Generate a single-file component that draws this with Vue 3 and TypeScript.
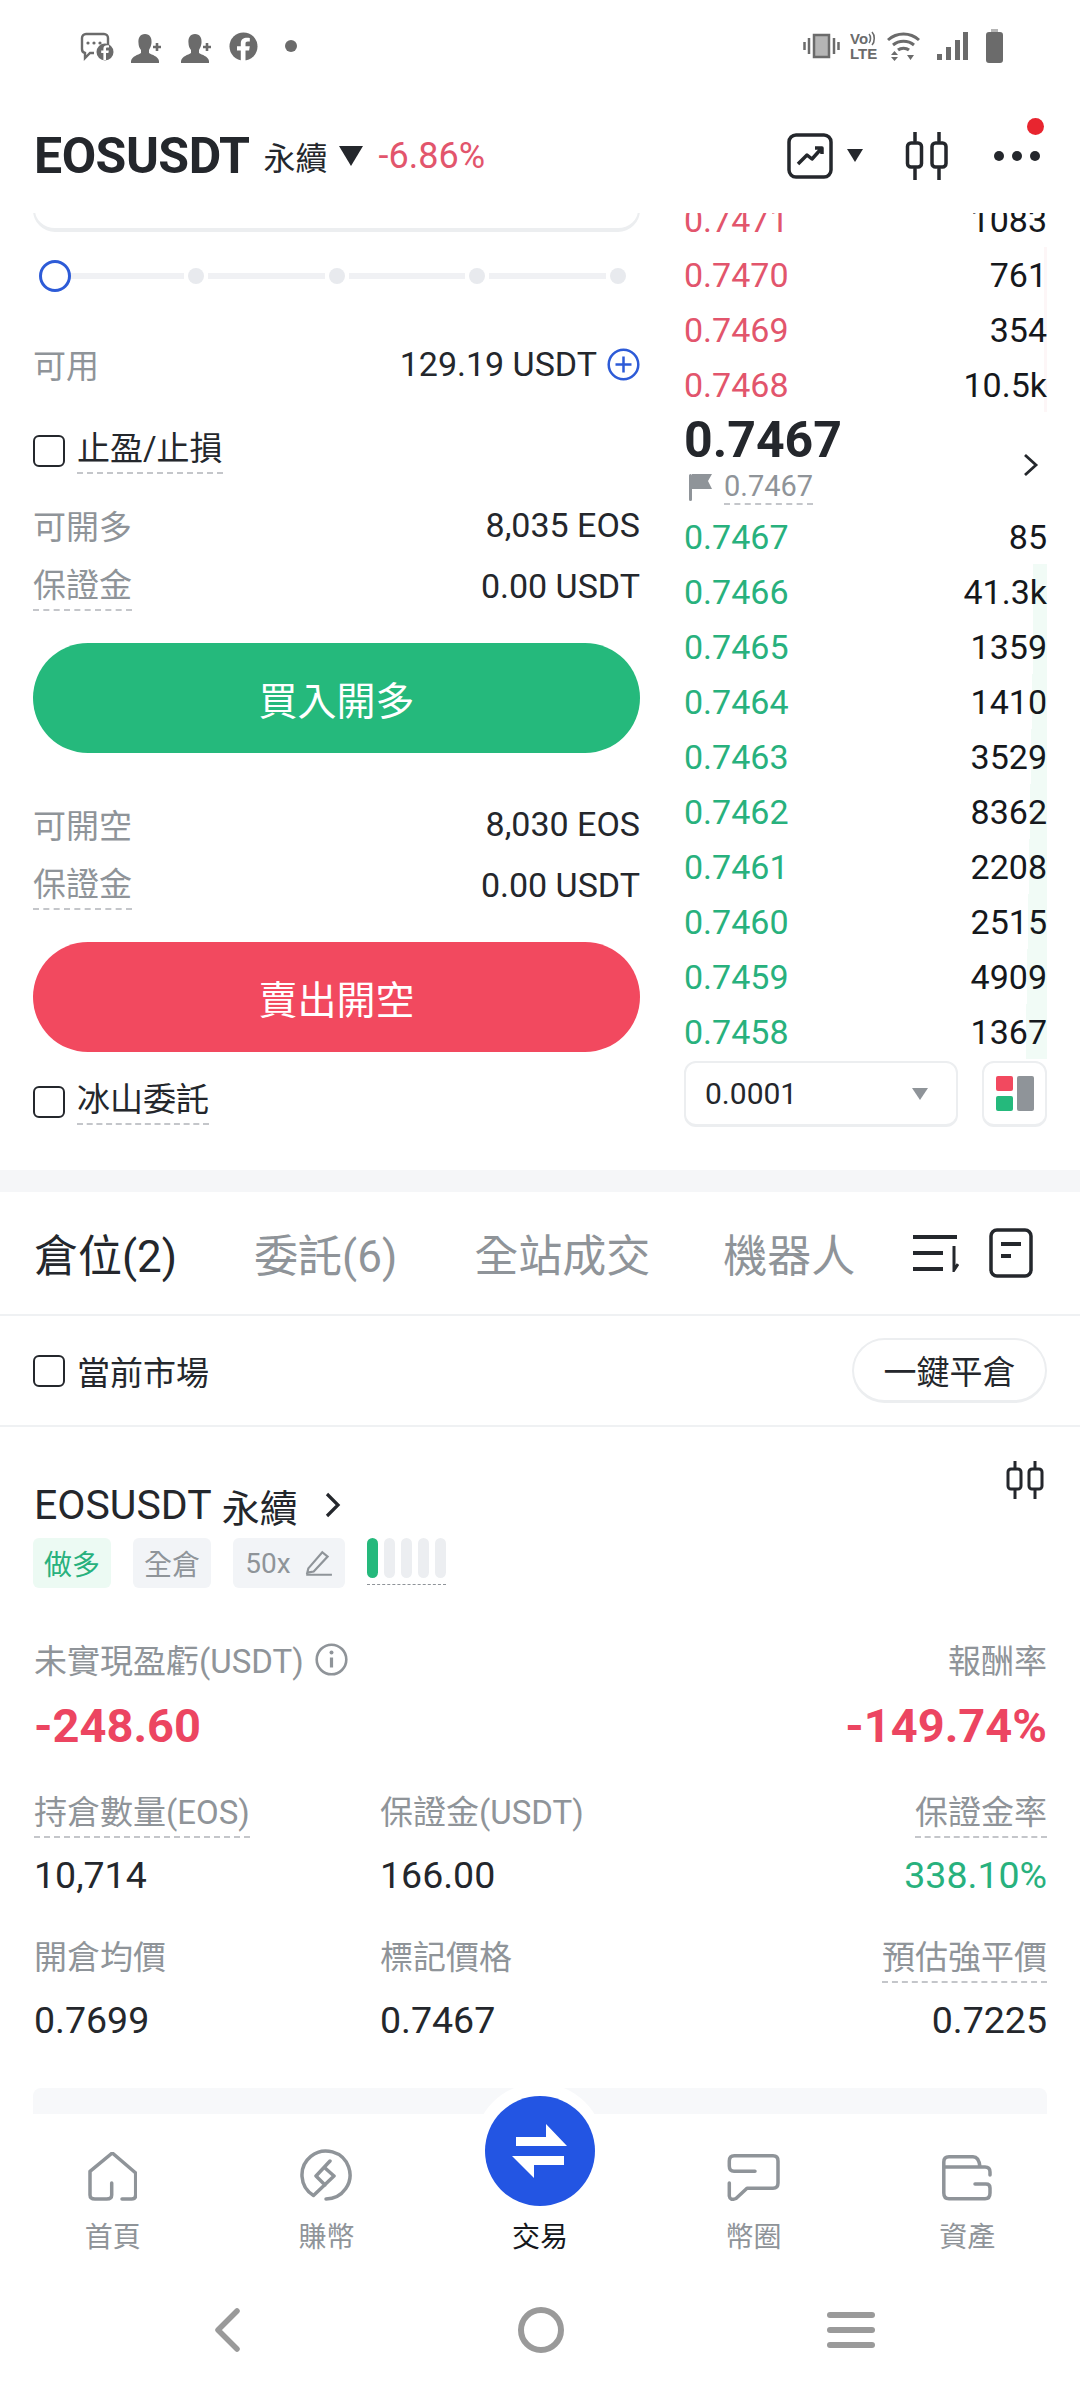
<template>
  <div class="page">
    <div class="status-bar">
      <div class="status-left">
        <svg width="34" height="30" viewBox="0 0 34 30" class="st-chat"><path d="M6 2h18a4 4 0 0 1 4 4v7M14 21H10l-5 5v-5a4 4 0 0 1-3-4V6a4 4 0 0 1 4-4" fill="none" stroke="#6b6b6b" stroke-width="2.4"/><circle cx="8" cy="11" r="1.6" fill="#6b6b6b"/><circle cx="14" cy="11" r="1.6" fill="#6b6b6b"/><circle cx="20" cy="11" r="1.6" fill="#6b6b6b"/><circle cx="25" cy="20" r="8.5" fill="#6b6b6b"/><path d="M26 28v-7h2.4l.4-2.6H26v-1.6c0-.8.3-1.2 1.2-1.2H29v-2.2c-2.8-.5-5.6 0-5.6 3.4v1.6h-2.2V21h2.2v7z" fill="#fff"/></svg>
        <svg v-for="n in 2" :key="n" width="33" height="29" viewBox="0 0 33 29" class="st-person"><path d="M14 0c5 0 7 4 6.500 9-.3 3-1.500 5-2.500 7v3c3 2 9 3 10 8v2H0v-2c1-5 7-6 10-8v-3C8.500 14 7.500 12 7.500 9 7 4 9 0 14 0z" fill="#6b6b6b"/><path d="M26 9v8M22 13h8" stroke="#6b6b6b" stroke-width="2.600"/></svg>
        <svg width="29" height="29" viewBox="0 0 29 29" class="st-fb"><circle cx="14.500" cy="14.500" r="14" fill="#6b6b6b"/><path d="M16.500 29V18.500h3.600l.7-4.300h-4.300v-2.400c0-1.300.6-2.200 2.300-2.200h2V6c-4.800-.9-9 .3-9 5.500v2.700H8v4.300h3.800V29z" fill="#fff"/></svg>
        <span class="st-dot"></span>
      </div>
      <div class="status-right">
        <svg width="37" height="26" viewBox="0 0 37 26"><rect x="11" y="2" width="15" height="22" fill="#b5b5b5" stroke="#6b6b6b" stroke-width="2.500"/><path d="M1.500 9v8M6 5v16M31 5v16M35.500 9v8" stroke="#6b6b6b" stroke-width="2.500"/></svg>
        <svg width="28" height="30" viewBox="0 0 28 30"><text x="0" y="13" class="volte">Vo</text><path d="M19 3c2 2 2 7 0 9M22 1c3 3 3 10 0 13" fill="none" stroke="#6b6b6b" stroke-width="1.600"/><text x="0" y="28" class="volte">LTE</text></svg>
        <svg width="33" height="30" viewBox="0 0 33 30"><path d="M1 9c9-8 22-8 31 0M6 14c6-5 15-5 21 0M11 19c3-2.500 8-2.500 11 0" fill="none" stroke="#6b6b6b" stroke-width="3"/><path d="M4 24l3.500-4 3.500 4zM4 26l3.500 4 3.500-4zM20 24h7l-3.500 5z" fill="#6b6b6b"/></svg>
        <svg width="31" height="28" viewBox="0 0 31 28"><rect x="0" y="22" width="5" height="6" fill="#6b6b6b"/><rect x="9" y="15" width="5" height="13" fill="#6b6b6b"/><rect x="18" y="8" width="5" height="20" fill="#6b6b6b"/><rect x="26" y="0" width="5" height="28" fill="#6b6b6b"/></svg>
        <svg width="17" height="34" viewBox="0 0 17 34"><path d="M5 0h7v3h2a3 3 0 0 1 3 3v25a3 3 0 0 1-3 3H3a3 3 0 0 1-3-3V6a3 3 0 0 1 3-3h2z" fill="#6b6b6b"/><path d="M5 0h7v3H5z" fill="#b5b5b5"/></svg>
      </div>
    </div>

    <header class="top-bar">
      <span class="symbol">EOSUSDT</span>
      <span class="perp">永續</span>
      <span class="caret"></span>
      <span class="change">-6.86%</span>
      <div class="top-icons">
        <svg width="46" height="46" viewBox="0 0 46 46" class="chart-ic"><rect x="2" y="2" width="42" height="42" rx="7" fill="none" stroke="#24272c" stroke-width="3.500"/><path d="M11 31l9-9 5 4 9-10M28 15h7v6" fill="none" stroke="#24272c" stroke-width="3.500" stroke-linejoin="round"/></svg>
        <span class="caret small"></span>
        <svg width="44" height="48" viewBox="0 0 44 48" class="candle-ic"><path d="M10 0v9M10 37v11M34 0v9M34 37v11" stroke="#24272c" stroke-width="3.500" stroke-linecap="round"/><rect x="2.500" y="11" width="14" height="24" rx="3.500" fill="none" stroke="#24272c" stroke-width="3.500"/><rect x="27" y="11" width="14" height="24" rx="3.500" fill="none" stroke="#24272c" stroke-width="3.500"/></svg>
        <div class="more">
          <i></i><i></i><i></i>
          <span class="red-dot"></span>
        </div>
      </div>
    </header>

    <section class="trade">
      <div class="form-col">
        <div class="input-card"></div>
        <div class="slider">
          <span class="ring"></span>
          <template v-for="n in 4" :key="n">
            <span class="track"></span>
            <span class="stop"></span>
          </template>
        </div>
        <div class="row avail">
          <span class="muted">可用</span>
          <span class="value">129.19 USDT
            <svg width="33" height="33" viewBox="0 0 33 33" class="plus"><circle cx="16.500" cy="16.500" r="14.800" fill="none" stroke="#2d5bd7" stroke-width="2.500"/><path d="M16.500 8.500v16M8.500 16.500h16" stroke="#2d5bd7" stroke-width="2.500"/></svg>
          </span>
        </div>
        <div class="row check-row tp">
          <span class="box"></span>
          <span class="dash">止盈/止損</span>
        </div>
        <div class="row open-long">
          <span class="muted">可開多</span>
          <span class="value">8,035 EOS</span>
        </div>
        <div class="row margin">
          <span class="muted dash">保證金</span>
          <span class="value">0.00 USDT</span>
        </div>
        <button class="big-btn buy">買入開多</button>
        <div class="row open-short">
          <span class="muted">可開空</span>
          <span class="value">8,030 EOS</span>
        </div>
        <div class="row margin">
          <span class="muted dash">保證金</span>
          <span class="value">0.00 USDT</span>
        </div>
        <button class="big-btn sell">賣出開空</button>
        <div class="row check-row iceberg">
          <span class="box"></span>
          <span class="dash">冰山委託</span>
        </div>
      </div>

      <div class="book-col">
        <div v-for="a in asks" :key="a.price" class="book-row">
          <span class="depth ask" :style="{ width: a.depth + 'px' }"></span>
          <span class="ask-price">{{ a.price }}</span>
          <span class="qty">{{ a.qty }}</span>
        </div>
        <div class="mid">
          <div class="mid-left">
            <div class="mid-price">0.7467</div>
            <div class="mark">
              <svg width="24" height="28" viewBox="0 0 24 28"><path d="M1 2.500a1.500 1.500 0 0 1 3 0V26.500a1.500 1.500 0 0 1-3 0zM4 1h20l-4 7 4 8H4z" fill="#8f9499"/></svg>
              <span class="mark-val">0.7467</span>
            </div>
          </div>
          <svg width="16" height="24" viewBox="0 0 16 24" class="mid-arrow"><path d="M2 2l11 10L2 22" fill="none" stroke="#24272c" stroke-width="2.800"/></svg>
        </div>
        <div v-for="b in bids" :key="b.price" class="book-row">
          <span class="depth bid" :style="{ width: b.depth + 'px' }"></span>
          <span class="bid-price">{{ b.price }}</span>
          <span class="qty">{{ b.qty }}</span>
        </div>
        <div class="book-foot">
          <div class="tick">
            <span>0.0001</span>
            <span class="tick-caret"></span>
          </div>
          <div class="layout-btn">
            <div class="lb-left"><i class="lb-red"></i><i class="lb-green"></i></div>
            <i class="lb-gray"></i>
          </div>
        </div>
      </div>
    </section>

    <div class="band"></div>

    <nav class="tabs">
      <span class="tab active">倉位(2)</span>
      <span class="tab">委託(6)</span>
      <span class="tab">全站成交</span>
      <span class="tab">機器人</span>
      <svg width="46" height="38" viewBox="0 0 46 38" class="tab-sort"><path d="M0 3h44M0 19h30M0 35h30" stroke="#24272c" stroke-width="4"/><path d="M41 12v24l4-6" fill="none" stroke="#24272c" stroke-width="3"/></svg>
      <svg width="44" height="50" viewBox="0 0 44 50"><rect x="2" y="2" width="40" height="46" rx="6" fill="none" stroke="#24272c" stroke-width="3.500"/><path d="M12 16h20M12 28h10" stroke="#24272c" stroke-width="4"/></svg>
    </nav>

    <div class="market-row">
      <span class="box"></span>
      <span class="market-label">當前市場</span>
      <button class="close-all">一鍵平倉</button>
    </div>

    <section class="position">
      <div class="pos-head">
        <span class="pos-name">EOSUSDT</span>
        <span class="pos-perp">永續</span>
        <svg width="18" height="28" viewBox="0 0 18 28" class="pos-arrow"><path d="M3 3l11 11L3 25" fill="none" stroke="#24272c" stroke-width="3.200"/></svg>
        <svg width="38" height="38" viewBox="0 0 38 38" class="pos-candle"><path d="M9 0v7M9 29v9M29 0v7M29 29v9" stroke="#24272c" stroke-width="3" stroke-linecap="round"/><rect x="2" y="8" width="13" height="20" rx="3" fill="none" stroke="#24272c" stroke-width="3"/><rect x="23" y="8" width="13" height="20" rx="3" fill="none" stroke="#24272c" stroke-width="3"/></svg>
      </div>
      <div class="tags">
        <span class="tag long">做多</span>
        <span class="tag">全倉</span>
        <span class="tag lev">50x
          <svg width="30" height="30" viewBox="0 0 28 28"><path d="M3 25h24M5 19L18 4l5 4-13 14-6 1z" fill="none" stroke="#8f9499" stroke-width="2"/></svg>
        </span>
        <div class="risk">
          <i class="on"></i><i></i><i></i><i></i><i></i>
        </div>
      </div>

      <div class="pnl-head">
        <span class="muted">未實現盈虧(USDT)
          <svg width="33" height="33" viewBox="0 0 33 33" class="info"><circle cx="16.500" cy="16.500" r="14.800" fill="none" stroke="#8f9499" stroke-width="2.600"/><path d="M16.500 14.500v10" stroke="#8f9499" stroke-width="3.200"/><circle cx="16.500" cy="9.500" r="2" fill="#8f9499"/></svg>
        </span>
        <span class="muted">報酬率</span>
      </div>
      <div class="pnl-vals">
        <span>-248.60</span>
        <span>-149.74%</span>
      </div>

      <div class="stats">
        <div v-for="s in stats" :key="s.label" class="stat" :class="s.cls">
          <span class="muted stat-label" :class="{ dash: s.dashed }">{{ s.label }}</span>
          <span class="stat-val" :class="{ up: s.up }">{{ s.value }}</span>
        </div>
      </div>
    </section>

    <div class="strip"></div>

    <footer class="bottom">
      <div class="halo"></div>
      <div class="nav-items">
        <div class="nav-item">
          <svg width="49" height="49" viewBox="0 0 49 49"><path d="M34 47h9.700Q47.700 47 47.700 43V21L24.300 1 2 19.300V43Q2 47 7 47h11.700Q23.700 47 23.700 43V31" fill="none" stroke="#8f9499" stroke-width="3.500" stroke-linecap="round" stroke-linejoin="round"/></svg>
          <span>首頁</span>
        </div>
        <div class="nav-item">
          <svg width="52" height="52" viewBox="0 0 52 52"><path d="M26 50A24 24 0 1 0 13.500 46.500L34 27 25 19M30 12L16 27l9 9" fill="none" stroke="#8f9499" stroke-width="3.500" stroke-linecap="round" stroke-linejoin="round"/></svg>
          <span>賺幣</span>
        </div>
        <div class="nav-item active">
          <div class="swap">
            <svg width="56" height="56" viewBox="0 0 56 56"><path d="M4 14h30V1l21 22H4zM52 33v9H22v13L0 33z" fill="#fff"/></svg>
          </div>
          <span>交易</span>
        </div>
        <div class="nav-item">
          <svg width="53" height="47" viewBox="0 0 53 47"><path d="M28 17.300H7Q2.300 17.300 2.300 12V7Q2.300 1.800 7.300 1.800H46Q51 1.800 51 7V29Q51 34.300 46 34.300H20L9 44.500Q3 47 2.300 42V29" fill="none" stroke="#8f9499" stroke-width="3.500" stroke-linecap="round" stroke-linejoin="round"/></svg>
          <span>幣圈</span>
        </div>
        <div class="nav-item">
          <svg width="50" height="46" viewBox="0 0 50 46"><path d="M48 20V17Q48 12 43 12H1.800V7Q1.800 1.800 7 1.800H31Q37 1.800 38 12M1.800 12V38Q1.800 43.800 7 43.800H43Q48 43.800 48 38V33Q48 29 44 29H33" fill="none" stroke="#8f9499" stroke-width="3.500" stroke-linecap="round" stroke-linejoin="round"/></svg>
          <span>資產</span>
        </div>
      </div>
      <div class="sys-nav">
        <svg width="28" height="44" viewBox="0 0 28 44"><path d="M24 3L5 22l19 19" fill="none" stroke="#9a9a9a" stroke-width="5.500" stroke-linecap="round" stroke-linejoin="round"/></svg>
        <span class="sys-home"></span>
        <div class="sys-menu"><i></i><i></i><i></i></div>
      </div>
    </footer>
  </div>
</template>

<script setup lang="ts">
type BookRow = { price: string; qty: string; depth: number };
type Stat = { label: string; value: string; dashed: boolean; up?: boolean; cls?: string };

const asks: BookRow[] = [
  { price: "0.7471", qty: "1083", depth: 0 },
  { price: "0.7470", qty: "761", depth: 3 },
  { price: "0.7469", qty: "354", depth: 3 },
  { price: "0.7468", qty: "10.5k", depth: 3 },
];

const bids: BookRow[] = [
  { price: "0.7467", qty: "85", depth: 0 },
  { price: "0.7466", qty: "41.3k", depth: 14 },
  { price: "0.7465", qty: "1359", depth: 14 },
  { price: "0.7464", qty: "1410", depth: 15 },
  { price: "0.7463", qty: "3529", depth: 16 },
  { price: "0.7462", qty: "8362", depth: 17 },
  { price: "0.7461", qty: "2208", depth: 18 },
  { price: "0.7460", qty: "2515", depth: 19 },
  { price: "0.7459", qty: "4909", depth: 20 },
  { price: "0.7458", qty: "1367", depth: 21 },
];

const stats: Stat[] = [
  { label: "持倉數量(EOS)", value: "10,714", dashed: true },
  { label: "保證金(USDT)", value: "166.00", dashed: false },
  { label: "保證金率", value: "338.10%", dashed: true, up: true, cls: "right" },
  { label: "開倉均價", value: "0.7699", dashed: false },
  { label: "標記價格", value: "0.7467", dashed: false },
  { label: "預估強平價", value: "0.7225", dashed: true, cls: "right" },
];
</script>

<style>
html, body {
  margin: 0;
  padding: 0;
  background: #fff;
}
</style>

<style scoped>
.page {
  position: relative;
  width: 1080px;
  height: 2388px;
  overflow: hidden;
  background: #fff;
  color: #24272c;
  font-family: Roboto, "Noto Sans CJK TC", sans-serif;
  font-size: 33px;
}

/* status bar */
.status-bar {
  height: 92px;
  display: flex;
  justify-content: space-between;
  box-sizing: border-box;
  padding: 29px 77px 0 80px;
}
.status-left {
  display: flex;
  align-items: flex-start;
}
.st-chat { margin-top: 3px; }
.st-person { margin: 5px 0 0 17px; }
.st-fb { margin: 3px 0 0 15px; }
.st-dot {
  width: 12px;
  height: 12px;
  border-radius: 50%;
  background: #6b6b6b;
  margin: 11px 0 0 27px;
}
.status-right {
  display: flex;
  align-items: center;
  gap: 10px;
  height: 34px;
}
.status-right svg:nth-child(3) { margin-left: -1px; }
.status-right svg:nth-child(4) { margin-left: 7px; }
.status-right svg:nth-child(5) { margin-left: 8px; }
.volte {
  font-family: "Liberation Sans", sans-serif;
  font-size: 15px;
  font-weight: 700;
  fill: #6b6b6b;
}

/* header */
.top-bar {
  height: 121px;
  display: flex;
  align-items: center;
  box-sizing: border-box;
  padding: 6px 40px 0 34px;
}
.symbol {
  font-size: 50px;
  font-weight: 700;
  letter-spacing: -0.5px;
}
.perp {
  margin-left: 14px;
  font-size: 32px;
}
.caret {
  width: 0;
  height: 0;
  border-left: 12px solid transparent;
  border-right: 12px solid transparent;
  border-top: 20px solid #24272c;
  margin-left: 11px;
}
.caret.small {
  border-left-width: 8px;
  border-right-width: 8px;
  border-top-width: 13px;
  margin-left: 14px;
}
.change {
  margin-left: 16px;
  font-size: 36px;
  color: #e2556c;
}
.top-icons {
  margin-left: auto;
  display: flex;
  align-items: center;
}
.candle-ic { margin-left: 42px; }
.more {
  position: relative;
  display: flex;
  gap: 8px;
  margin-left: 45px;
}
.more i {
  width: 10px;
  height: 10px;
  border-radius: 50%;
  background: #24272c;
}
.red-dot {
  position: absolute;
  right: -4px;
  top: -33px;
  width: 17px;
  height: 17px;
  border-radius: 50%;
  background: #e8252f;
}

/* trade section */
.trade {
  height: 957px;
  overflow: hidden;
  display: flex;
  padding-left: 33px;
}
.form-col {
  width: 607px;
  flex-shrink: 0;
}
.input-card {
  height: 49px;
  margin-top: -30px;
  box-sizing: border-box;
  border: 2px solid #eceef0;
  border-bottom-width: 4px;
  border-radius: 22px;
}
.slider {
  height: 32px;
  margin: 28px 14px 0 14px;
  display: flex;
  align-items: center;
  gap: 4px;
}
.ring {
  width: 32px;
  height: 32px;
  box-sizing: border-box;
  border: 3.5px solid #2d5bd7;
  border-radius: 50%;
  flex-shrink: 0;
  margin: 0 -8px;
  background: #fff;
  position: relative;
}
.track {
  flex: 1;
  height: 6px;
  background: #f0f1f4;
}
.stop {
  width: 16px;
  height: 16px;
  border-radius: 50%;
  background: #e8eaee;
  flex-shrink: 0;
}
.row {
  height: 40px;
  display: flex;
  align-items: center;
  justify-content: space-between;
}
.avail { margin-top: 52px; }
.tp { margin-top: 47px; }
.open-long { margin-top: 34px; }
.margin { margin-top: 21px; }
.margin .dash { margin-top: 4px; }
.open-short { margin-top: 51px; }
.iceberg { margin-top: 30px; }
.muted { color: #8f9499; }
.value {
  color: #24272c;
  font-size: 34px;
  display: flex;
  align-items: center;
  gap: 10px;
}
.plus { flex-shrink: 0; }
.dash {
  border-bottom: 2px dashed #c4c6ca;
  line-height: 40px;
  padding-bottom: 3px;
}
.check-row {
  justify-content: flex-start;
  gap: 12px;
}
.box {
  width: 32px;
  height: 32px;
  box-sizing: border-box;
  border: 2.5px solid #24272c;
  border-radius: 6px;
  flex-shrink: 0;
}
.big-btn {
  display: block;
  width: 100%;
  height: 110px;
  margin-top: 37px;
  border: none;
  border-radius: 55px;
  color: #fff;
  font-family: inherit;
  font-size: 39px;
}
.buy { background: #25b97c; }
.sell { background: #f2495f; }

/* order book */
.book-col {
  width: 363px;
  margin-left: 44px;
  margin-top: -21px;
}
.book-row {
  position: relative;
  height: 55px;
  display: flex;
  align-items: center;
  justify-content: space-between;
  font-size: 34px;
}
.depth {
  position: absolute;
  right: 0;
  top: 0;
  bottom: 0;
}
.depth.ask { background: #fdf6f7; }
.depth.bid { background: #f1fbf6; }
.ask-price,
.bid-price,
.qty { position: relative; }
.ask-price { color: #e2556c; }
.bid-price { color: #28b17d; }
.qty { color: #15181c; }
.mid {
  height: 97px;
  display: flex;
  align-items: center;
  justify-content: space-between;
}
.mid-left {
  margin-top: -3px;
}
.mid-price {
  font-size: 50px;
  font-weight: 700;
  line-height: 55px;
}
.mark {
  display: flex;
  align-items: center;
  gap: 12px;
  margin-left: 4px;
  height: 38px;
  font-size: 29px;
  color: #8f9499;
}
.mark-val {
  border-bottom: 2px dashed #c4c6ca;
  line-height: 34px;
}
.mid-arrow { margin-right: 8px; margin-top: 8px; }
.book-foot {
  display: flex;
  justify-content: space-between;
  margin-top: 2px;
}
.tick {
  width: 274px;
  height: 66px;
  box-sizing: border-box;
  border: 2px solid #eceef0;
  border-bottom-width: 3px;
  border-radius: 12px;
  display: flex;
  align-items: center;
  justify-content: space-between;
  padding: 0 28px 0 19px;
  font-size: 30px;
}
.tick-caret {
  width: 0;
  height: 0;
  border-left: 8px solid transparent;
  border-right: 8px solid transparent;
  border-top: 12px solid #8f9499;
}
.layout-btn {
  width: 65px;
  height: 66px;
  box-sizing: border-box;
  border: 2px solid #eceef0;
  border-bottom-width: 3px;
  border-radius: 12px;
  display: flex;
  align-items: center;
  justify-content: center;
  gap: 4px;
}
.lb-left {
  display: flex;
  flex-direction: column;
  gap: 5px;
}
.lb-red,
.lb-green {
  display: block;
  width: 17px;
  height: 15px;
  border-radius: 2px;
}
.lb-red { background: #f2495f; }
.lb-green { background: #25b97c; }
.lb-gray {
  width: 17px;
  height: 35px;
  border-radius: 2px;
  background: #8f9499;
}

.band {
  height: 22px;
  background: #f5f6f8;
}

/* tabs */
.tabs {
  height: 124px;
  box-sizing: border-box;
  border-bottom: 2px solid #eff1f3;
  display: flex;
  align-items: center;
  padding: 0 47px 0 34px;
  font-size: 44px;
}
.tab {
  color: #8f9499;
  margin-right: 77px;
  white-space: nowrap;
}
.tab.active { color: #24272c; }
.tab:nth-child(3) { margin-right: 73px; }
.tab:nth-child(4) { margin-right: 0; }
.tab-sort { margin-right: 30px; margin-left: auto; }

.market-row {
  height: 111px;
  box-sizing: border-box;
  border-bottom: 2px solid #eff1f3;
  display: flex;
  align-items: center;
  padding: 0 33px;
  gap: 12px;
}
.close-all {
  margin-left: auto;
  width: 195px;
  height: 65px;
  background: #fff;
  border: 2px solid #eceef0;
  border-bottom-width: 3px;
  border-radius: 33px;
  color: #24272c;
  font-family: inherit;
  font-size: 33px;
  padding: 0;
}

/* position card */
.position {
  padding: 0 33px 0 34px;
  height: 659px;
  box-sizing: border-box;
}
.pos-head {
  height: 46px;
  padding-top: 55px;
  display: flex;
  align-items: center;
}
.pos-name { font-size: 41px; }
.pos-perp { margin-left: 10px; font-size: 38px; }
.pos-arrow { margin-left: 26px; }
.pos-candle { margin-left: auto; margin-top: -50px; margin-right: 3px; }
.tags {
  display: flex;
  align-items: flex-start;
  margin-top: 10px;
  margin-left: -1px;
  gap: 22px;
}
.tag {
  height: 50px;
  width: 78px;
  border-radius: 6px;
  background: #f2f4f7;
  color: #8f9499;
  font-size: 28px;
  display: flex;
  align-items: center;
  justify-content: center;
  gap: 12px;
}
.tag.long {
  background: #ecfaf3;
  color: #28b17d;
}
.tag.lev { width: 112px; }
.risk {
  display: flex;
  gap: 6px;
  height: 40px;
  padding-bottom: 6px;
  border-bottom: 1px dashed #8f9499;
}
.risk i {
  width: 11px;
  height: 40px;
  border-radius: 6px;
  background: #eceef1;
}
.risk i.on { background: #25b97c; }
.pnl-head {
  margin-top: 51px;
  height: 40px;
  display: flex;
  justify-content: space-between;
  align-items: center;
}
.pnl-head .muted {
  display: flex;
  align-items: center;
  gap: 11px;
}
.pnl-vals {
  margin-top: 20px;
  height: 52px;
  display: flex;
  justify-content: space-between;
  align-items: center;
  font-size: 47px;
  font-weight: 700;
  color: #ec4561;
}
.stats {
  margin-top: 42px;
  display: grid;
  grid-template-columns: 346px 1fr 1fr;
  row-gap: 33px;
}
.stat {
  display: flex;
  flex-direction: column;
  align-items: flex-start;
  height: 112px;
}
.stat.right { align-items: flex-end; }
.stat-label {
  height: 40px;
  line-height: 40px;
  padding-bottom: 3px;
  border-bottom: 2px solid transparent;
}
.stat-label.dash { border-bottom: 2px dashed #c4c6ca; }
.stat-val {
  margin-top: 15px;
  font-size: 37.5px;
  color: #24272c;
}
.stat-val.up { color: #28b17d; }

.strip {
  position: absolute;
  left: 33px;
  right: 33px;
  top: 2088px;
  height: 30px;
  background: #f7f8fa;
  border-radius: 8px 8px 0 0;
}

/* bottom nav */
.bottom {
  position: absolute;
  left: 0;
  right: 0;
  top: 2114px;
  bottom: 0;
  background: #fff;
}
.halo {
  position: absolute;
  left: 474px;
  top: -31px;
  width: 130px;
  height: 130px;
  border-radius: 50%;
  background: #fff;
}
.nav-items {
  position: relative;
  display: flex;
  padding: 0 6px;
  height: 141px;
}
.nav-item {
  flex: 1;
  display: flex;
  flex-direction: column;
  align-items: center;
  justify-content: flex-end;
  gap: 14px;
  font-size: 28px;
  color: #8f9499;
}
.nav-item svg { flex-shrink: 0; }
.nav-item.active { color: #15181c; }
.swap {
  width: 110px;
  height: 110px;
  flex-shrink: 0;
  border-radius: 50%;
  background: #2355e3;
  display: flex;
  align-items: center;
  justify-content: center;
  margin-bottom: -5px;
}
.sys-nav {
  display: flex;
  align-items: center;
  height: 46px;
  margin-top: 52px;
  padding-left: 213px;
}
.sys-home {
  width: 46px;
  height: 46px;
  box-sizing: border-box;
  border: 6px solid #9a9a9a;
  border-radius: 50%;
  margin-left: 277px;
}
.sys-menu {
  display: flex;
  flex-direction: column;
  gap: 9px;
  margin-left: 263px;
}
.sys-menu i {
  display: block;
  width: 48px;
  height: 6px;
  border-radius: 3px;
  background: #9a9a9a;
}
</style>
